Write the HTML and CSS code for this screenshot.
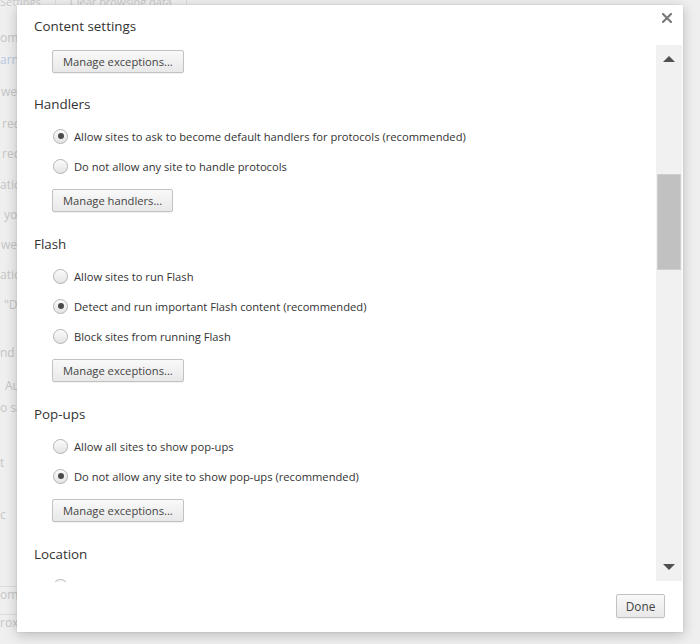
FILE: index.html
```html
<!DOCTYPE html>
<html>
<head>
<meta charset="utf-8">
<link rel="stylesheet" href="styles.css">
</head>
<body>
<div class="page">
  <div class="bg-tabs">
    <span class="bg-tab">Settings</span>
    <span class="bg-sep"></span>
    <span class="bg-tab">Clear browsing data</span>
    <span class="bg-sep"></span>
  </div>
  <div class="bg-lines">
    <div class="bgl g-first">om</div>
    <div class="bgl g22 bg-link">arn</div>
    <div class="bgl g32 in2">web</div>
    <div class="bgl g32 in3">red</div>
    <div class="bgl g30 in3">red</div>
    <div class="bgl g31">atio</div>
    <div class="bgl g30 in5">yo</div>
    <div class="bgl g30 in2">web</div>
    <div class="bgl g30">atio</div>
    <div class="bgl g30 in5">"Do</div>
    <div class="bgl g48">nd</div>
    <div class="bgl g33 in6">Au</div>
    <div class="bgl g22">o sa</div>
    <div class="bgl g55">t</div>
    <div class="bgl g52">c</div>
    <div class="bgl g79 bg-box">om</div>
    <div class="bgl g27 bg-box">rox</div>
  </div>

  <div class="dialog">
    <div class="dlg-head">
      <div class="dlg-title">Content settings</div>
      <div class="dlg-close">
        <svg width="10" height="10" viewBox="0 0 10 10"><path d="M1 1 L9 9 M9 1 L1 9" stroke="#7a7a7a" stroke-width="2.2" stroke-linecap="square"/></svg>
      </div>
    </div>
    <div class="dlg-body">
      <div class="content">
        <div class="btn">Manage exceptions...</div>

        <div class="sec-title">Handlers</div>
        <div class="radios">
          <div class="radio-row"><span class="radio checked"></span><span>Allow sites to ask to become default handlers for protocols (recommended)</span></div>
          <div class="radio-row"><span class="radio"></span><span>Do not allow any site to handle protocols</span></div>
        </div>
        <div class="btn">Manage handlers...</div>

        <div class="sec-title">Flash</div>
        <div class="radios">
          <div class="radio-row"><span class="radio"></span><span>Allow sites to run Flash</span></div>
          <div class="radio-row"><span class="radio checked"></span><span>Detect and run important Flash content (recommended)</span></div>
          <div class="radio-row"><span class="radio"></span><span>Block sites from running Flash</span></div>
        </div>
        <div class="btn">Manage exceptions...</div>

        <div class="sec-title">Pop-ups</div>
        <div class="radios">
          <div class="radio-row"><span class="radio"></span><span>Allow all sites to show pop-ups</span></div>
          <div class="radio-row"><span class="radio checked"></span><span>Do not allow any site to show pop-ups (recommended)</span></div>
        </div>
        <div class="btn">Manage exceptions...</div>

        <div class="sec-title">Location</div>
        <div class="radios">
          <div class="radio-row"><span class="radio"></span></div>
        </div>
      </div>
      <div class="scrollbar">
        <div class="sb-arrow">
          <svg width="12" height="6" viewBox="0 0 12 6"><path d="M0 6 L6 0 L12 6 Z" fill="#505050"/></svg>
        </div>
        <div class="sb-track">
          <div class="sb-thumb"></div>
        </div>
        <div class="sb-arrow">
          <svg width="12" height="6" viewBox="0 0 12 6"><path d="M0 0 L12 0 L6 6 Z" fill="#505050"/></svg>
        </div>
      </div>
    </div>
    <div class="dlg-foot">
      <div class="btn btn-done">Done</div>
    </div>
  </div>
</div>
</body>
</html>
```

FILE: styles.css
```css
html, body {
  margin: 0;
  padding: 0;
}
body {
  width: 700px;
  height: 644px;
  overflow: hidden;
  background: #eeeeee;
  font-family: "Open Sans", "Noto Sans", sans-serif;
}
.page {
  position: relative;
  width: 700px;
  height: 644px;
  overflow: hidden;
  background: #efefef;
}
.bg-tabs {
  display: flex;
  align-items: center;
  height: 14px;
  margin-top: -6px;
  font-size: 11px;
  color: #c9c9c9;
  white-space: nowrap;
}
.bg-tab {
  padding: 0 14px 0 0;
}
.bg-sep {
  width: 1px;
  height: 14px;
  background: #dedede;
  margin-right: 14px;
}
.bg-lines {
  display: flex;
  flex-direction: column;
  width: 60px;
  font-size: 12px;
  color: #c6c6c6;
  white-space: nowrap;
}
.bgl {
  height: 16px;
  line-height: 16px;
  margin-left: 0;
}
.g-first { margin-top: 22px; }
.g22 { margin-top: 6px; }
.g27 { margin-top: 11px; }
.g30 { margin-top: 14px; }
.g31 { margin-top: 15px; }
.g32 { margin-top: 16px; }
.g33 { margin-top: 17px; }
.g48 { margin-top: 32px; }
.g52 { margin-top: 36px; }
.g55 { margin-top: 39px; }
.g79 { margin-top: 63px; }
.in2 { padding-left: 1px; }
.in3 { padding-left: 2px; }
.in5 { padding-left: 4px; }
.in6 { padding-left: 5px; }
.bg-link {
  color: #b9c7e2;
}
.bg-box {
  border-top: 1px solid #dcdcdc;
}

.dialog {
  position: absolute;
  left: 17px;
  top: 5px;
  width: 666px;
  height: 627px;
  background: #ffffff;
  box-shadow: 0 3px 12px rgba(0, 0, 0, 0.22), 0 0 2px rgba(0, 0, 0, 0.1);
  display: flex;
  flex-direction: column;
  color: #333333;
}
.dlg-head {
  height: 40px;
  display: flex;
  justify-content: space-between;
  align-items: flex-start;
  flex-shrink: 0;
}
.dlg-title {
  padding: 11px 0 0 17px;
  font-size: 13.4px;
  line-height: 20px;
  color: #333333;
}
.dlg-close {
  width: 10px;
  height: 10px;
  margin: 8px 11px 0 0;
  display: flex;
}
.dlg-body {
  height: 537px;
  display: flex;
  flex-shrink: 0;
}
.content {
  flex: 1;
  overflow: hidden;
  padding: 5px 0 0 35px;
  font-size: 11.2px;
}
.sec-title {
  margin: 22px 0 0 -18px;
  font-size: 13.4px;
  line-height: 20px;
  height: 20px;
  color: #333333;
}
.content > .btn:first-child + .sec-title {
  margin-top: 21px;
}
.radios {
  margin-top: 7px;
  display: flex;
  flex-direction: column;
}
.radio-row {
  height: 30px;
  display: flex;
  align-items: center;
  color: #333333;
  white-space: nowrap;
}
.radio {
  width: 13px;
  height: 13px;
  border: 1px solid #b3b3b3;
  border-radius: 50%;
  background: linear-gradient(#fafafa, #e4e4e4);
  box-shadow: inset 0 1px 1px rgba(255,255,255,0.8);
  margin: 0 6px 0 1px;
  flex-shrink: 0;
  display: flex;
  align-items: center;
  justify-content: center;
}
.radio.checked::after {
  content: "";
  width: 6px;
  height: 6px;
  border-radius: 50%;
  background: #4a4a4a;
}
.btn {
  display: inline-flex;
  align-items: center;
  justify-content: center;
  height: 21px;
  margin-top: 8px;
  padding: 0 10px;
  border: 1px solid #c2c2c2;
  border-radius: 2px;
  background: linear-gradient(#f9f9f9, #e8e8e8);
  box-shadow: 0 1px 0 rgba(0,0,0,0.05);
  font-size: 11.2px;
  color: #444444;
  white-space: nowrap;
}
.content > .btn:first-child {
  margin-top: 0;
}
.scrollbar {
  width: 26px;
  margin: 0 1px 1px 0;
  background: #f1f1f1;
  display: flex;
  flex-direction: column;
  flex-shrink: 0;
}
.sb-arrow {
  height: 28px;
  display: flex;
  align-items: center;
  justify-content: center;
}
.sb-track {
  flex: 1;
  padding-top: 101px;
}
.sb-thumb {
  height: 94px;
  margin: 0 1px 0 1px;
  background: #c1c1c1;
  border: 1px solid #d0d0d0;
}
.dlg-foot {
  flex: 1;
  display: flex;
  justify-content: flex-end;
  align-items: flex-start;
  padding: 12px 18px 0 0;
}
.btn-done {
  margin-top: 0;
  width: 47px;
  height: 22px;
  padding: 0;
  font-size: 11.8px;
}
```
